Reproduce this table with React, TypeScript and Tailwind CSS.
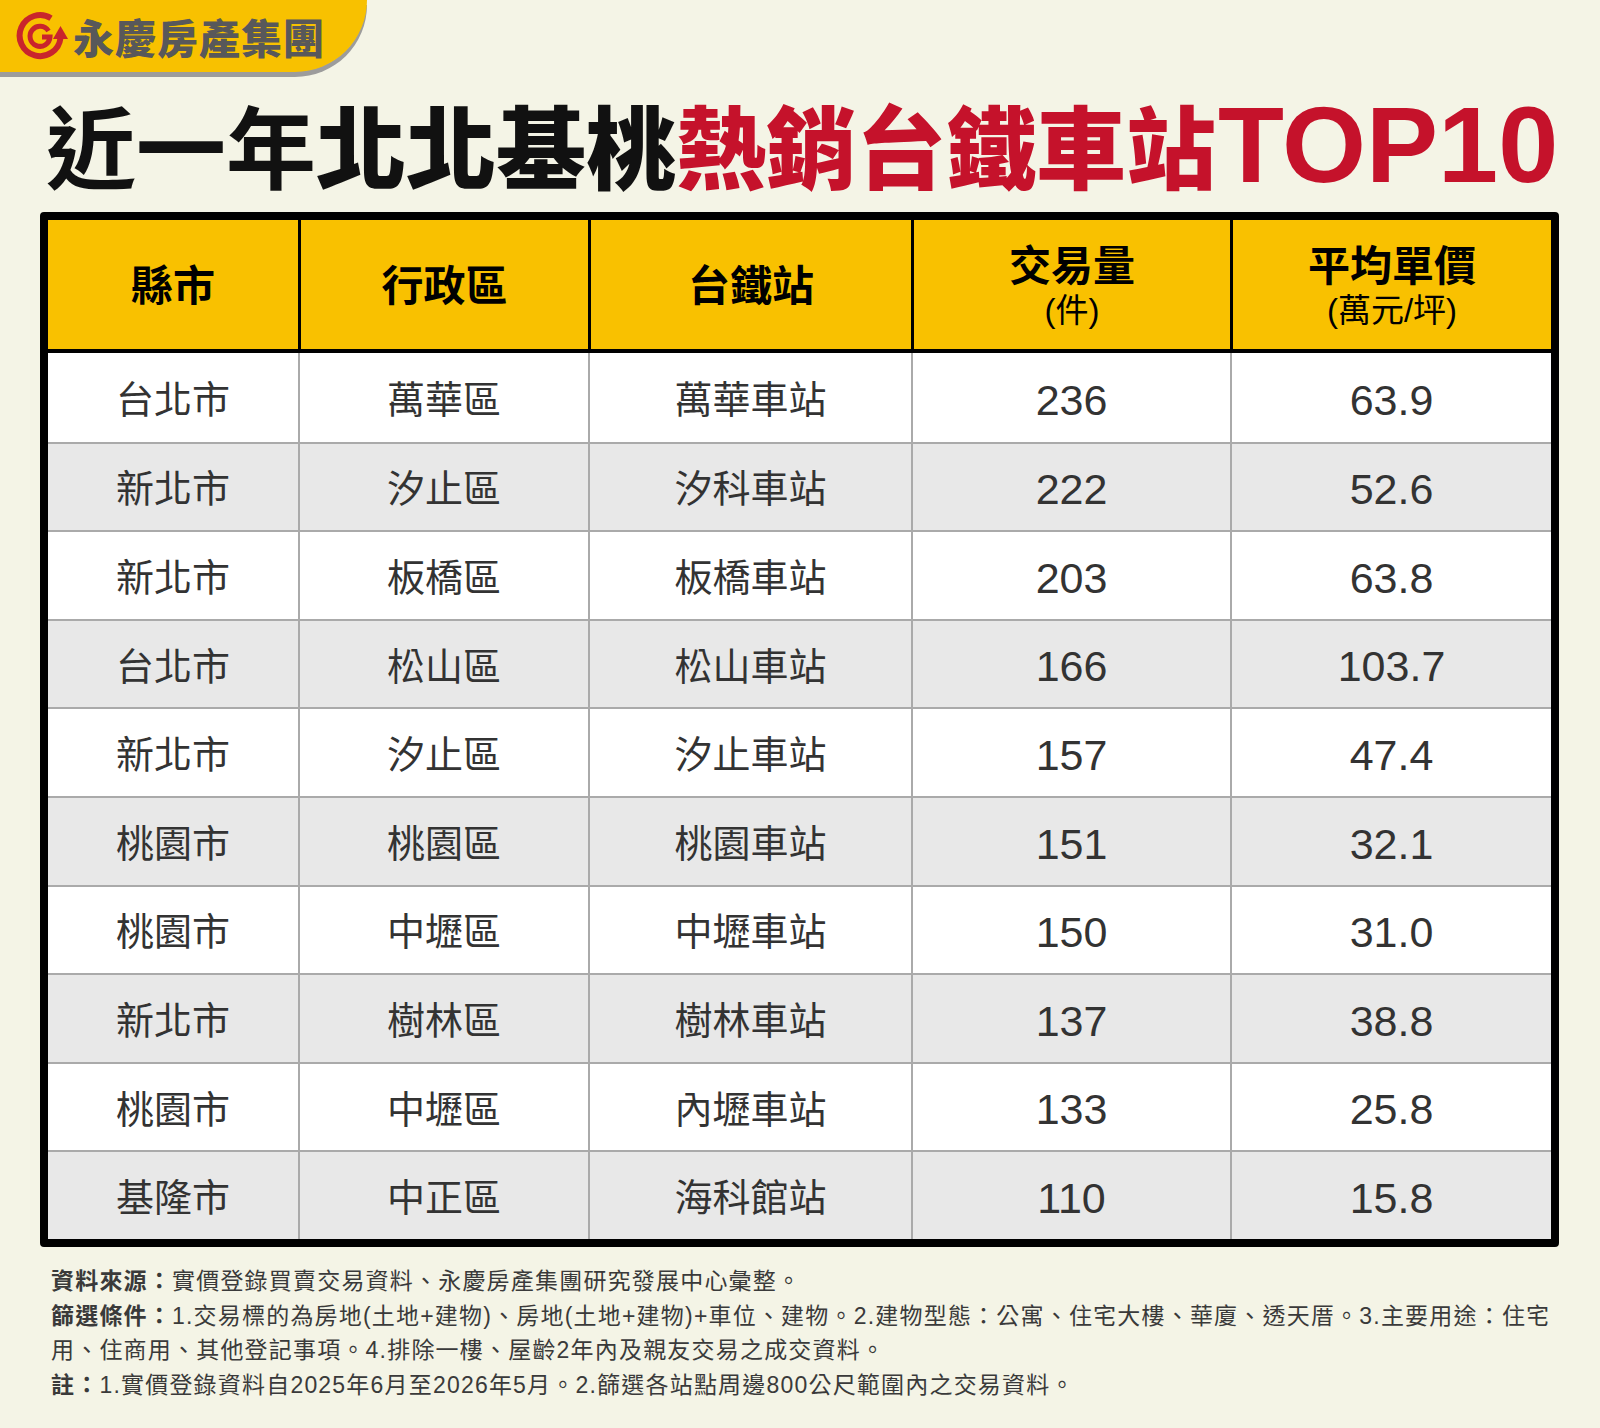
import React from "react"

const rows = [
  ["台北市", "萬華區", "萬華車站", "236", "63.9"],
  ["新北市", "汐止區", "汐科車站", "222", "52.6"],
  ["新北市", "板橋區", "板橋車站", "203", "63.8"],
  ["台北市", "松山區", "松山車站", "166", "103.7"],
  ["新北市", "汐止區", "汐止車站", "157", "47.4"],
  ["桃園市", "桃園區", "桃園車站", "151", "32.1"],
  ["桃園市", "中壢區", "中壢車站", "150", "31.0"],
  ["新北市", "樹林區", "樹林車站", "137", "38.8"],
  ["桃園市", "中壢區", "內壢車站", "133", "25.8"],
  ["基隆市", "中正區", "海科館站", "110", "15.8"],
]

const cols = "grid grid-cols-[250px_290px_323px_319px_321px]"

function Logo() {
  return (
    <svg viewBox="0 0 54 50" className="w-[54px] h-[50px]">
      <path d="M44.5 26 A20.5 20.5 0 1 1 35 6.2" fill="none" stroke="#c9252c" strokeWidth="6" />
      <path d="M37 27 L52 27 L44.5 14 Z" fill="#c9252c" />
      <path d="M32.5 19 A10 10 0 1 0 34 25 L26 25" fill="none" stroke="#c9252c" strokeWidth="5" />
    </svg>
  )
}

export default function App() {
  return (
    <div className="min-h-[1428px] w-[1600px] bg-[#f4f4e6] font-['Liberation_Sans','Noto_Sans_CJK_TC','Noto_Sans_CJK_JP',sans-serif]">
      {/* brand banner */}
      <div className="flex items-center w-[367px] h-[72px] bg-[#f8c100] rounded-br-[72px] shadow-[0_5px_0_#9c9c9c]">
        <div className="ml-[16px] mt-[1px]">
          <Logo />
        </div>
        <span className="ml-[3px] text-[41px] leading-none font-black tracking-[1px] text-[#58585a] font-['Noto_Sans_CJK_TC',sans-serif]">
          永慶房產集團
        </span>
      </div>

      {/* title */}
      <div className="mt-[19px] pl-[46px] flex items-baseline">
        <span className="text-[90px] leading-none font-bold text-[#111] font-['Noto_Sans_CJK_TC',sans-serif]">近一年</span>
        <span className="text-[90px] leading-none font-black text-[#111] font-['Noto_Sans_CJK_TC',sans-serif]">北北基桃</span>
        <span className="text-[90px] leading-none font-black text-[#c5122b] font-['Noto_Sans_CJK_TC',sans-serif]">熱銷台鐵車站</span>
        <span className="ml-[2px] text-[108px] leading-none font-bold text-[#c5122b] font-['Liberation_Sans',sans-serif]">TOP10</span>
      </div>

      {/* table */}
      <div className="mt-[13px] ml-[40px] w-[1519px] h-[1035px] border-[8px] border-black rounded-[4px] bg-white overflow-hidden">
        <div className={`${cols} h-[133px] bg-[#f9c100] border-b-[4px] border-black text-black font-bold`}>
          <div className="flex items-center justify-center pt-[3px] text-[42px]">縣市</div>
          <div className="flex items-center justify-center pt-[3px] text-[42px] border-l-[3px] border-black">行政區</div>
          <div className="flex items-center justify-center pt-[3px] text-[42px] border-l-[3px] border-black">台鐵站</div>
          <div className="flex flex-col items-center justify-center pt-[4px] border-l-[3px] border-black">
            <span className="text-[42px] leading-[48px]">交易量</span>
            <span className="text-[33px] leading-[40px] font-normal">(件)</span>
          </div>
          <div className="flex flex-col items-center justify-center pt-[4px] border-l-[3px] border-black">
            <span className="text-[42px] leading-[48px]">平均單價</span>
            <span className="text-[33px] leading-[40px] font-normal">(萬元/坪)</span>
          </div>
        </div>
        {rows.map((r, i) => (
          <div
            key={i}
            className={`${cols} h-[88.6px] text-[#333] ${i % 2 === 1 ? "bg-[#e8e8e8]" : "bg-white"} ${i > 0 ? "border-t-2 border-[#aaaaaa]" : ""}`}
          >
            <div className="flex items-center justify-center pt-[6px] text-[38px]">{r[0]}</div>
            <div className="flex items-center justify-center pt-[6px] text-[38px] border-l-2 border-[#aaaaaa]">{r[1]}</div>
            <div className="flex items-center justify-center pt-[6px] text-[38px] border-l-2 border-[#aaaaaa]">{r[2]}</div>
            <div className="flex items-center justify-center pt-[5px] text-[43px] border-l-2 border-[#aaaaaa]">{r[3]}</div>
            <div className="flex items-center justify-center pt-[5px] text-[43px] border-l-2 border-[#aaaaaa]">{r[4]}</div>
          </div>
        ))}
      </div>

      {/* notes */}
      <div className="mt-[17px] pl-[51px] text-[23px] leading-[34.5px] tracking-[1.2px] text-[#3a3a3a] whitespace-nowrap">
        <div>
          <span className="font-bold">資料來源：</span>實價登錄買賣交易資料、永慶房產集團研究發展中心彙整。
        </div>
        <div>
          <span className="font-bold">篩選條件：</span>1.交易標的為房地(土地+建物)、房地(土地+建物)+車位、建物。2.建物型態：公寓、住宅大樓、華廈、透天厝。3.主要用途：住宅
        </div>
        <div>用、住商用、其他登記事項。4.排除一樓、屋齡2年內及親友交易之成交資料。</div>
        <div>
          <span className="font-bold">註：</span>1.實價登錄資料自2025年6月至2026年5月。2.篩選各站點周邊800公尺範圍內之交易資料。
        </div>
      </div>
    </div>
  )
}
